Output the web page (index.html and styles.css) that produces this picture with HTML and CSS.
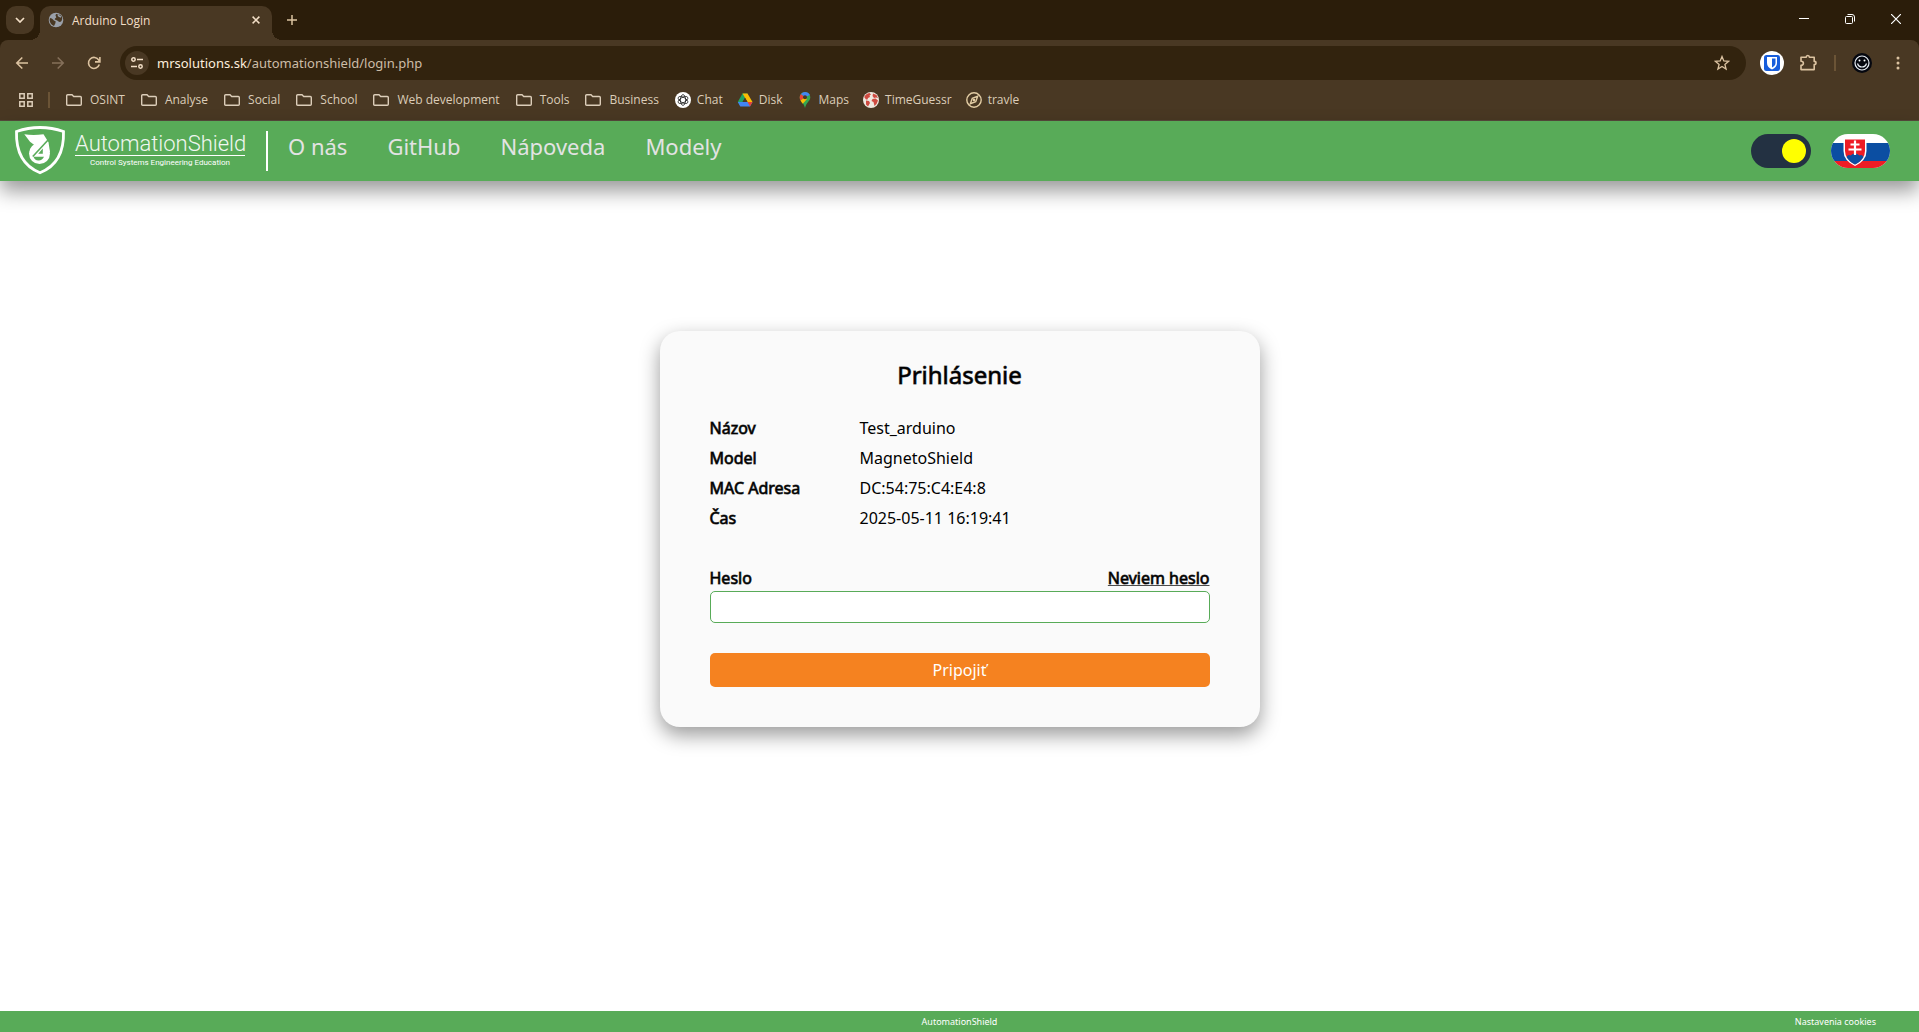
FILE: index.html
```html
<!DOCTYPE html>
<html lang="sk">
<head>
<meta charset="utf-8">
<title>Arduino Login</title>
<link rel="stylesheet" href="styles.css">
</head>
<body>
<svg class="defs" width="0" height="0" aria-hidden="true">
  <symbol id="folder" viewBox="0 0 16 16"><path d="M1.700 2.700h4.300l1.700 1.800h6.600q1 0 1 1v6.800q0 1-1 1H1.700q-1 0-1-1V3.700q0-1 1-1z" fill="none" stroke="currentColor" stroke-width="1.400"/></symbol>
</svg>
<div class="browser">
  <div class="tabstrip">
    <button class="tab-search" aria-label="Search tabs"><svg width="10" height="6" viewBox="0 0 10 6"><path d="M1 1l4 4 4-4" fill="none" stroke="currentColor" stroke-width="1.700"/></svg></button>
    <div class="tab">
      <svg width="16" height="16" viewBox="0 0 16 16"><circle cx="8" cy="8" r="7.300" fill="#9aa0a9"/><path d="M2 6q2 0 3 1.500T7.500 9v2l-1.500 3Q2 12.500 1.600 8zM8 2q-1 1.500 0 2.500t-1 2q-1 1 1 1.500t2.500 1.500q1.500 1 3-.5 1-2 .5-4-1.500-3-6-3z" fill="#493823"/><path d="M10 2.500q.500 2 3 2.500" stroke="#9aa0a9" fill="none" stroke-width="1.500"/></svg>
      <span class="tab-title">Arduino Login</span>
      <button class="plain" aria-label="Close tab"><svg width="8" height="8" viewBox="0 0 8 8"><path d="M.6.6l6.800 6.800M7.400.6L.6 7.400" stroke="#f3dfc7" stroke-width="1.500"/></svg></button>
    </div>
    <button class="plain new-tab" aria-label="New tab"><svg width="12" height="12" viewBox="0 0 12 12"><path d="M6 1v10M1 6h10" stroke="currentColor" stroke-width="1.500"/></svg></button>
    <div class="window-controls">
      <button class="plain" aria-label="Minimize"><svg width="10" height="10" viewBox="0 0 10 10"><path d="M0 4.500h10" stroke="#fff"/></svg></button>
      <button class="plain" aria-label="Restore"><svg width="10" height="10" viewBox="0 0 10 10" fill="none" stroke="#fff"><rect x=".5" y="2.500" width="7" height="7" rx="1"/><path d="M2.500.5H7q2.500 0 2.500 2.500v4.500"/></svg></button>
      <button class="plain" aria-label="Close"><svg width="10" height="10" viewBox="0 0 10 10"><path d="M0 0l10 10M10 0L0 10" stroke="#fff" stroke-width="1.200"/></svg></button>
    </div>
  </div>

  <div class="toolbar">
    <button class="plain tool" aria-label="Back"><svg width="14" height="14" viewBox="0 0 14 14" fill="none" stroke="currentColor" stroke-width="1.600"><path d="M13 7H2M7.300 1.500L1.800 7l5.500 5.500"/></svg></button>
    <button class="plain tool dim" aria-label="Forward"><svg width="14" height="14" viewBox="0 0 14 14" fill="none" stroke="currentColor" stroke-width="1.600"><path d="M1 7h11M6.700 1.500L12.200 7l-5.500 5.500"/></svg></button>
    <button class="plain tool" aria-label="Reload"><svg width="14" height="14" viewBox="0 0 14 14" fill="none" stroke="currentColor" stroke-width="1.600"><path d="M12.300 8.500A5.500 5.500 0 1 1 11.800 4.200l.8 1M12.900 1v4.900H8"/></svg></button>
    <div class="omnibox">
      <button class="plain site-info" aria-label="Site information"><svg width="14" height="12" viewBox="0 0 14 12" fill="none" stroke="currentColor" stroke-width="1.500"><circle cx="3.500" cy="2.500" r="1.700"/><path d="M7 2.500h6M1 9.500h6"/><circle cx="10.500" cy="9.500" r="1.700"/></svg></button>
      <span class="url"><span class="host">mrsolutions.sk</span>/automationshield/login.php</span>
      <button class="plain star" aria-label="Bookmark"><svg width="16" height="16" viewBox="0 0 16 16"><path d="M8 1.500l1.800 4.400 4.800.4-3.700 3.100 1.200 4.700L8 11.500l-4.100 2.600 1.200-4.700L1.400 6.300l4.800-.4z" fill="none" stroke="currentColor" stroke-width="1.300"/></svg></button>
    </div>
    <button class="plain tool" aria-label="Bitwarden"><svg width="24" height="24" viewBox="0 0 24 24"><circle cx="12" cy="12" r="12" fill="#fff"/><rect x="4" y="4" width="16" height="16" rx="2.500" fill="#175ddc"/><path d="M7 6h10v6q0 4-5 6.500Q7 16 7 12z" fill="#fff"/><path d="M12 7.500h3.500V12q0 2.500-3.500 4.500z" fill="#175ddc"/></svg></button>
    <button class="plain tool" aria-label="Extensions"><svg width="18" height="18" viewBox="0 0 18 18"><path d="M2 3.200h5.200q0-1.700 1.600-1.700t1.600 1.700h4.800v4.200q1.800 0 1.800 1.600t-1.800 1.600v5H2v-4.300q2.400 0 2.400-2T2 7.300z" fill="none" stroke="currentColor" stroke-width="1.600" stroke-linejoin="round"/></svg></button>
    <span class="divider"></span>
    <button class="plain tool" aria-label="Profile"><svg width="20" height="20" viewBox="0 0 20 20"><circle cx="10" cy="10" r="10" fill="#05070f"/><g fill="none" stroke="#e8eef5" stroke-width="1.200"><circle cx="10" cy="10" r="7"/><path d="M5.500 10.500q1 3.500 4.500 3.500t4.500-3.500"/></g><circle cx="7.500" cy="7.500" r="1" fill="#fff"/><circle cx="12.500" cy="7.500" r="1" fill="#fff"/></svg></button>
    <button class="plain tool" aria-label="Menu"><svg width="4" height="14" viewBox="0 0 4 14" fill="currentColor"><circle cx="2" cy="2" r="1.500"/><circle cx="2" cy="7" r="1.500"/><circle cx="2" cy="12" r="1.500"/></svg></button>
  </div>

  <nav class="bookmarks" aria-label="Bookmarks">
    <button class="plain" aria-label="Apps"><svg width="14" height="14" viewBox="0 0 14 14" fill="none" stroke="currentColor" stroke-width="1.500"><path d="M.8.8h4.400v4.400H.8zM8.800.8h4.400v4.400H8.800zM.8 8.800h4.400v4.400H.8zM8.800 8.800h4.400v4.400H8.800z"/></svg></button>
    <span class="divider"></span>
    <a class="folder" href="#"><svg width="16" height="16"><use href="#folder"/></svg>OSINT</a>
    <a class="folder" href="#"><svg width="16" height="16"><use href="#folder"/></svg>Analyse</a>
    <a class="folder" href="#"><svg width="16" height="16"><use href="#folder"/></svg>Social</a>
    <a class="folder" href="#"><svg width="16" height="16"><use href="#folder"/></svg>School</a>
    <a class="folder" href="#"><svg width="16" height="16"><use href="#folder"/></svg>Web development</a>
    <a class="folder" href="#"><svg width="16" height="16"><use href="#folder"/></svg>Tools</a>
    <a class="folder" href="#"><svg width="16" height="16"><use href="#folder"/></svg>Business</a>
    <a class="site" href="#"><svg width="16" height="16" viewBox="0 0 16 16"><circle cx="8" cy="8" r="8" fill="#fff"/><g fill="none" stroke="#222" stroke-width=".8"><ellipse cx="8" cy="8" rx="2.600" ry="5.400"/><ellipse cx="8" cy="8" rx="2.600" ry="5.400" transform="rotate(60 8 8)"/><ellipse cx="8" cy="8" rx="2.600" ry="5.400" transform="rotate(120 8 8)"/></g></svg>Chat</a>
    <a class="site" href="#"><svg width="16" height="16" viewBox="0 0 16 16"><path d="M5.500 1.500h5L8 6 3.300 14 .8 10z" fill="#1fa463"/><path d="M5.500 1.500h5l5 8.500h-5z" fill="#fbbc04"/><path d="M.8 10h14.700l-2.500 4.500H3.300z" fill="#4285f4"/><path d="M10.500 10h5L13 14.500z" fill="#ea4335"/><path d="M8 5.800L10.500 10h-5z" fill="#493823"/></svg>Disk</a>
    <a class="site" href="#"><svg width="16" height="16" viewBox="0 0 16 16"><path d="M8 0a5.300 5.300 0 0 1 5.300 5.300C13.300 9 9.500 10 8 16 6.500 10 2.700 9 2.700 5.300A5.300 5.300 0 0 1 8 0z" fill="#34a853"/><path d="M8 5.300L3.500 8.500Q2.700 7 2.700 5.300q0-2 1.300-3.400z" fill="#ea4335"/><path d="M8 5.300L3.500 8.500q1 1.800 2.300 3.200L10 7z" fill="#fbbc04"/><path d="M4 1.900Q5.500 0 8 0q3.500 0 4.800 3L8 5.300z" fill="#4285f4"/><circle cx="8" cy="5.300" r="2" fill="#493823"/></svg>Maps</a>
    <a class="site" href="#"><svg width="16" height="16" viewBox="0 0 16 16"><circle cx="8" cy="8" r="8" fill="#efe9e0"/><path d="M1.200 5Q3 1.500 6.500 1L8 2.500 6.500 3.500 7 5 5 6 4.500 7.500 3 7.500zM3 8.500l3 .5 1 2-2 3.500-2-2zM10 1.500l3.500 1.500 1.500 3-2-.5-2 .5-1.500-2zM9.500 7l3-.5 2.500 2-1.500 3.500-2 2-1-4-2-1z" fill="#cf4b41"/></svg>TimeGuessr</a>
    <a class="site" href="#"><svg width="16" height="16" viewBox="0 0 16 16" fill="none" stroke="#e3cda4" stroke-width="1.400"><circle cx="8" cy="8" r="7.200"/><path d="M11.700 4.300L9.700 9.700 4.300 11.700l2-5.400z"/><circle cx="8" cy="8" r=".6"/></svg>travle</a>
  </nav>
</div>

<header class="site-header">
  <a class="logo" href="#" aria-label="AutomationShield">
    <svg width="52" height="50" viewBox="0 0 52 50">
      <path d="M2.500 5.500Q14 1.500 26 1.500t23.500 4Q50.500 37 26 46.700 1.500 37 2.500 5.500z" fill="none" stroke="#fff" stroke-width="2.800"/>
      <circle cx="25.500" cy="27.500" r="10.500" fill="#fff"/>
      <path d="M10.300 8.200q9 1.500 19.200 0l5 8 1.500 10-16 1-4.500-1.500 4.500-7-4-3z" fill="#fff"/>
      <path d="M34.500 13.500L18.800 30.500" stroke="#58ab58" stroke-width="1.600"/>
      <path d="M19.500 30.800H30q-1.500 3.700-5.500 3.700t-5-3.700zM28.800 22.500v5.300h-4.600z" fill="#58ab58"/>
    </svg>
    <span class="wordmark"><span class="brand">AutomationShield</span><span class="tagline">Control Systems Engineering Education</span></span>
  </a>
  <nav class="main-nav">
    <a href="#">O nás</a><a href="#">GitHub</a><a href="#">Nápoveda</a><a href="#">Modely</a>
  </nav>
  <input class="theme-switch" type="checkbox" role="switch" aria-label="Téma" checked>
  <button class="plain language" aria-label="Slovenčina"><svg width="59" height="34" viewBox="0 0 59 34">
    <path d="M0 0h60v34H0z" fill="#fff"/><path d="M0 9h60v18H0z" fill="#0b4ea2"/><path d="M0 27h60v7H0z" fill="#ee1c25"/>
    <path d="M12.500 4.500h23V17q0 9.500-11.500 15-11.500-5.500-11.500-15z" fill="#fff"/>
    <path d="M14 5.500h20V17q0 8-10 13.500Q14 25 14 17z" fill="#ee1c25"/>
    <path d="M15.500 23q1.500-3 4-1.500 4.500-4 9 0 2.500-1.500 4 1.500Q30 27.500 24 30.500q-6-3-8.500-7.500z" fill="#0b4ea2"/>
    <path d="M24 6.500V21M19.500 10.500h9M17.500 15.500h13" stroke="#fff" stroke-width="2.200"/>
  </svg></button>
</header>

<main>
  <form class="card">
    <h1>Prihlásenie</h1>
    <dl class="details">
      <dt>Názov</dt><dd>Test_arduino</dd>
      <dt>Model</dt><dd>MagnetoShield</dd>
      <dt>MAC Adresa</dt><dd>DC:54:75:C4:E4:8</dd>
      <dt>Čas</dt><dd>2025-05-11 16:19:41</dd>
    </dl>
    <div class="field-head"><label for="password">Heslo</label><a href="#">Neviem heslo</a></div>
    <input class="password" id="password" type="password">
    <button class="submit" type="button">Pripojiť</button>
  </form>
</main>

<footer class="site-footer">
  <span class="footer-name">AutomationShield</span>
  <a href="#">Nastavenia cookies</a>
</footer>
</body>
</html>
```
FILE: styles.css
```css
* { box-sizing: border-box; }

body {
  margin: 0;
  min-height: 100vh;
  display: flex;
  flex-direction: column;
  background: #fff;
  color: #000;
  font: 16px "Noto Sans", "Open Sans", sans-serif;
}

a { color: inherit; text-decoration: none; }
svg { display: block; flex: none; }
.defs { position: absolute; }

.plain {
  display: flex;
  align-items: center;
  justify-content: center;
  padding: 0;
  border: 0;
  background: none;
  color: inherit;
}

/* Browser chrome */
.browser {
  background: #2b1d0a;
  color: #dcc3a1;
  font-family: "Open Sans", "Noto Sans", sans-serif;
  font-size: 12px;
}

.tabstrip { display: flex; height: 40px; padding-left: 6px; }

.tab-search {
  display: flex;
  align-items: center;
  justify-content: center;
  width: 28px;
  height: 28px;
  margin: 6px 6px 0 0;
  padding: 0;
  border: 0;
  border-radius: 10px;
  background: #493823;
  color: #f3dfc7;
}

.tab {
  position: relative;
  display: flex;
  align-items: center;
  gap: 8px;
  width: 232px;
  margin-top: 6px;
  padding: 0 12px 6px 8px;
  border-radius: 10px 10px 0 0;
  background: #493823;
  color: #f3dfc7;
}

.tab::before,
.tab::after {
  content: "";
  position: absolute;
  bottom: 0;
  width: 10px;
  height: 10px;
}
.tab::before { right: 100%; background: radial-gradient(circle at 0 0, transparent 10px, #493823 10px); }
.tab::after { left: 100%; background: radial-gradient(circle at 100% 0, transparent 10px, #493823 10px); }

.tab-title { flex: 1; }
.new-tab { width: 40px; }
.window-controls { display: flex; margin-left: auto; padding-bottom: 2px; }
.window-controls .plain { width: 46px; }

.toolbar {
  display: flex;
  align-items: center;
  height: 40px;
  padding: 6px 3px 0 4px;
  border-radius: 8px 8px 0 0;
  background: #493823;
}

.tool { width: 36px; height: 34px; }
.dim { color: #85705a; }

.omnibox {
  flex: 1;
  display: flex;
  align-items: center;
  gap: 8px;
  height: 34px;
  margin: 0 8px;
  padding: 0 16px 0 5px;
  border-radius: 17px;
  background: #32230e;
  font-family: "Noto Sans", "Open Sans", sans-serif;
  font-size: 13px;
}

.site-info { width: 24px; height: 24px; border-radius: 50%; background: #493823; color: #f3dfc7; }
.url { flex: 1; color: #cdbda8; }
.host { color: #fdeedd; }

.divider { width: 2px; height: 16px; margin: 0 8px; background: #6b5436; }

.bookmarks {
  display: flex;
  align-items: center;
  height: 41px;
  padding: 0 19px 1px;
  border-bottom: 1px solid #564a3c;
  background: #493823;
  color: #dccdb9;
}
.bookmarks .divider { margin: 0 16px 0 15px; }
.bookmarks a { display: flex; align-items: center; margin-right: 16px; }
.bookmarks .folder { gap: 8px; }
.bookmarks .site { gap: 6px; margin-right: 14px; }

/* Site header */
.site-header {
  display: flex;
  align-items: center;
  height: 60px;
  padding: 0 29px 0 14px;
  background: #58ab58;
  box-shadow: 0 10px 20px rgba(0, 0, 0, .4);
}

.logo { display: flex; align-items: center; gap: 9px; color: #fff; }
.wordmark { display: flex; flex-direction: column; align-items: center; width: 170px; }
.brand {
  width: 100%;
  border-bottom: 1px solid #fff;
  font: 300 22px/23px "Roboto", sans-serif;
  color: #f0f7f0;
  white-space: nowrap;
}
.tagline { font: 8px/14px "Roboto", sans-serif; white-space: nowrap; }

.main-nav {
  display: flex;
  align-items: center;
  gap: 40px;
  height: 40px;
  margin: 0 auto 0 21px;
  padding: 0 0 10px 20px;
  border-left: 2px solid #fff;
  color: #e3e3e3;
  font-size: 22px;
}

.theme-switch {
  appearance: none;
  width: 60px;
  height: 34px;
  margin: 0 20px 0 0;
  padding: 5px;
  border-radius: 17px;
  background: #233142;
}
.theme-switch::before {
  content: "";
  display: block;
  width: 24px;
  height: 24px;
  border-radius: 50%;
  background: #ff0;
}
.theme-switch:checked::before { margin-left: auto; }

.language { border-radius: 17px; overflow: hidden; }

/* Login card */
main { flex: 1; display: flex; align-items: flex-start; justify-content: center; padding: 150px 20px 40px; }

.card {
  width: 100%;
  max-width: 600px;
  padding: 28px 50px 40px;
  border-radius: 20px;
  background: #fafafa;
  box-shadow: 0 8px 20px rgba(0, 0, 0, .4);
}

h1, dt, .field-head { font-weight: 400; -webkit-text-stroke: 1px rgba(0, 0, 0, .7); }
h1 { margin: 0 0 22px; font-size: 24px; line-height: 32px; text-align: center; }

.details { display: grid; grid-template-columns: 150px 1fr; margin: 0 0 32px; line-height: 30px; }
dd { margin: 0; }

.field-head { display: flex; justify-content: space-between; line-height: 26px; }
.field-head a { text-decoration: underline; }

.password {
  display: block;
  width: 100%;
  height: 32px;
  margin: 0 0 30px;
  padding: 0 8px;
  border: 1px solid #58ab58;
  border-radius: 5px;
  background: #fff;
  font: inherit;
}

.submit {
  display: block;
  width: 100%;
  height: 34px;
  padding: 0;
  border: 0;
  border-radius: 5px;
  background: #f58220;
  color: #fff;
  font: inherit;
}

/* Footer */
.site-footer {
  display: grid;
  grid-template-columns: 1fr auto 1fr;
  align-items: center;
  height: 21px;
  padding: 0 43px;
  background: #58ab58;
  color: #fff;
  font-size: 9px;
}
.footer-name { grid-column: 2; }
.site-footer a { justify-self: end; }
```
